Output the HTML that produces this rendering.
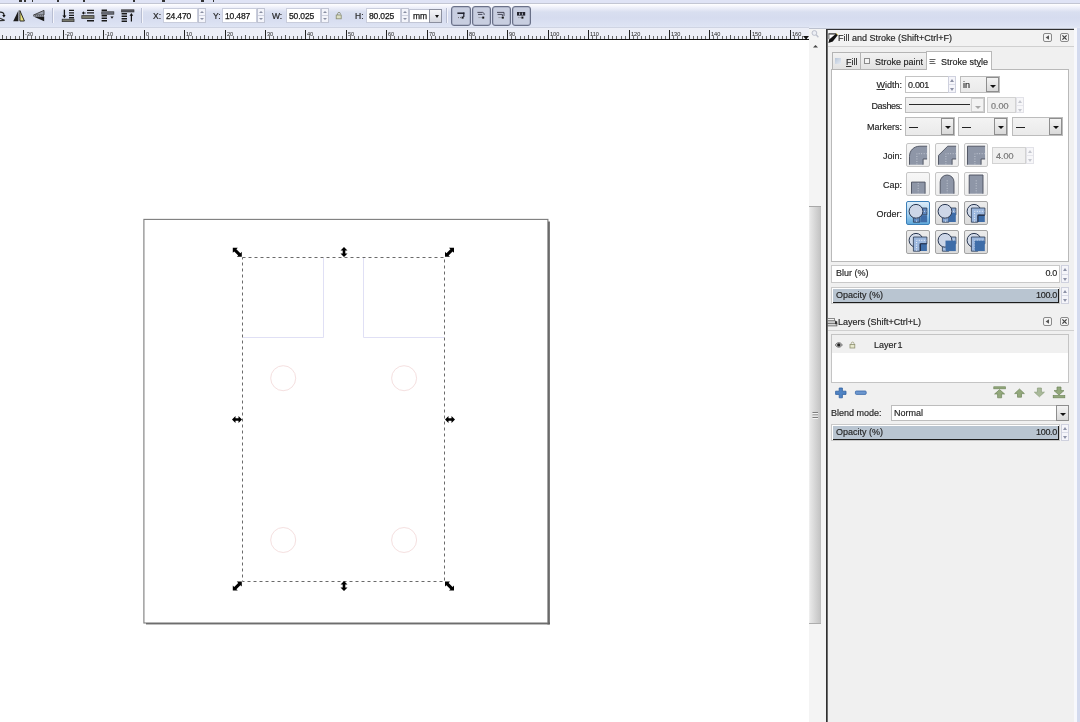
<!DOCTYPE html>
<html lang="en">
<head>
<meta charset="utf-8">
<title>Inkscape</title>
<style>
*{box-sizing:border-box;margin:0;padding:0}
html,body{width:1080px;height:722px;overflow:hidden;background:#fff}
body{position:relative;-webkit-font-smoothing:antialiased;font-family:"Liberation Sans",sans-serif;font-size:9px;color:#1a1a1a}
.abs,.abs>*{position:absolute}
.a{position:absolute}
/* top */
#topstrip{left:0;top:0;width:1080px;height:4px;background:#dfe3f5;border-bottom:1px solid #c3c6d3}
#topstrip i{position:absolute;top:0;height:2px;background:#333}
#toolbar{left:0;top:4px;width:1080px;height:24px;background:linear-gradient(#fff 0,#f1f2fb 3px,#d9dff0 8px,#d6dcef 14px,#dde3f3 22px,#e4e8f5 24px)}
#rulerbg{left:0;top:27px;width:809px;height:13px;background:#eceef7;border-top:1px solid #cfd4e3;border-bottom:1px solid #111}
.ruler{position:absolute;left:0;top:28px;will-change:transform}
.tl{position:absolute;font-size:8.5px;color:#161616;-webkit-text-stroke:0.2px #333;top:12px;line-height:9px}
.tf{position:absolute;top:8px;height:15px;background:#fff;border:1px solid #c9cddc;font-size:8.5px;line-height:15px;padding-left:2px;letter-spacing:-0.15px;color:#111;-webkit-text-stroke:0.25px #222}
.sp{position:absolute;width:8px;height:15px;top:8px;border:1px solid #c0c4d3;background:#f3f4fa}
.sp b{position:absolute;left:0;width:6px;height:6px}
.sp b:first-child{top:0;border-bottom:1px solid #d0d3e0;height:7px}.sp b:last-child{top:7px}
.sp b:after{content:"";position:absolute;left:0.5px;border:2.5px solid transparent}
.sp b:first-child:after{top:1.5px;border-bottom:2.5px solid #8a8fa3;border-top:0}
.sp b:last-child:after{top:2px;border-top:2.5px solid #8a8fa3;border-bottom:0}
.sep{position:absolute;top:9px;width:1px;height:15px;background:#b9bfd2}
.tog{position:absolute;top:6px;width:20px;height:20px;border:1px solid #697088;border-radius:3px;background:#c8cee0;box-shadow:inset 0 0 0 0.5px #9aa0b6}
/* canvas */
#page{left:143px;top:219px;width:406px;height:405px;border:1px solid #7a7a7a;border-right:2px solid #5e5e5e;border-bottom:2px solid #5e5e5e;background:#fff}
/* scrollbar */
#vs{left:809px;top:28px;width:17px;height:694px;background:#f4f4f4}
#thumb{left:809px;top:206px;width:12px;height:418px;background:linear-gradient(90deg,#f1f1f1 0,#e6e6e6 1.5px,#d8d8d8 45%,#c6c6c6 10.5px,#bdbdbd 12px);border-top:1px solid #a8a8a8;border-bottom:1px solid #adadad}
/* panel */
#panel{left:826px;top:29px;width:248px;height:693px;background:#f0f0f0;border-left:1px solid #303030;border-top:1px solid #303030;box-shadow:inset 1px 0 0 #6c6c6c}
#tbline{left:0;top:28px;width:1080px;height:1px;background:#bcc1ce}
#rstrip{left:1074px;top:28px;width:6px;height:694px;background:linear-gradient(90deg,#f7f8fc 0,#f7f8fc 2.5px,#d3daee 3.5px)}
.ph{position:absolute;left:828px;width:246px;height:16px;background:#f2f2f2;border-bottom:1px solid #d0d0d0}
.pt,.lbl,.fld,.cmb,.tl,.tf{will-change:transform}
.pt,.lbl,.fld,.cmb{-webkit-text-stroke:0.18px #333}
.pt{position:absolute;font-size:9px;line-height:11px;white-space:nowrap;color:#1a1a1a}
.hb{position:absolute;width:9px;height:9px;border:1px solid #8a8a8a;border-radius:2px;background:#f4f4f4}
.frame{position:absolute;background:#fff;border:1px solid #b9b9b9}
.tab{position:absolute;top:52px;height:18px;border:1px solid #b4b4b4;background:linear-gradient(#f2f2f2,#e2e2e2);}
.lbl{position:absolute;font-size:9px;line-height:11px;text-align:right;width:60px;left:842px;color:#1a1a1a;white-space:nowrap}
.fld{position:absolute;background:#fff;border:1px solid #c4c4c4;font-size:9px;line-height:14px;padding-left:3px;color:#1a1a1a}
.cmb{position:absolute;background:linear-gradient(#f3f3f3,#eaeaea);border:1px solid #bcbcbc;font-size:9px;line-height:14px;padding-left:4px}
.dd{position:absolute;right:0;top:0;bottom:0;width:13px;border:1px solid #8e8e8e;background:linear-gradient(#f4f4f4,#d9d9d9)}
.dd:after{content:"";position:absolute;left:2.5px;top:6.5px;border:3px solid transparent;border-top:3.5px solid #111;border-bottom:0}
.ddd{border-color:#d0d0d0;background:#f3f3f3}.ddd:after{border-top-color:#a8a8a8}
.dis{color:#9a9a9a;background:#f0f0f0;border-color:#d2d2d2}
.psp{position:absolute;width:8px;height:17px;border:1px solid #cfd1de;background:#f5f5fa}
.psp b{position:absolute;left:0;width:6px;height:7px}
.psp b:first-child{top:0;border-bottom:1px solid #d9dbe6;height:8px}.psp b:last-child{top:8px}
.psp b:after{content:"";position:absolute;left:0.5px;border:2.5px solid transparent}
.psp b:first-child:after{top:2px;border-bottom:3px solid #8c91a6;border-top:0}
.psp b:last-child:after{top:2.5px;border-top:3px solid #8c91a6;border-bottom:0}
.pd{border-color:#e2e2e8;background:#f7f7f9}.pd b:first-child{border-bottom-color:#e6e6ec}.pd b:first-child:after{border-bottom-color:#c6c8d0}.pd b:last-child:after{border-top-color:#c6c8d0}
.btn{position:absolute;width:24px;height:24px;border:1px solid #c6c6c6;border-radius:2px;background:linear-gradient(#f7f7f7,#ececec)}
.btn.g{border-color:#a3a3a3;background:linear-gradient(#ececec,#dcdcdc)}
.btn.on{border-color:#3c7fb8;background:linear-gradient(#dcecf9,#a9d2f0 55%,#5fa9dc)}
.btn svg{position:absolute;left:-1px;top:-1px}
.bar{position:absolute;background:#fff;border:1px solid #c9c9c9}
.bar .fill{position:absolute;left:1px;top:1px;right:0;bottom:0;background:#b9c5d1;border-bottom:1px solid #1c1c1c;border-right:1px solid #1c1c1c}
</style>
</head>
<body>
<!-- ===== top strip / toolbar ===== -->
<div id="topstrip" class="a"><i style="left:19px;width:3px"></i><i style="left:24px;width:2px"></i><i style="left:32px;width:1px"></i><i style="left:57px;width:2px"></i><i style="left:83px;width:2px"></i><i style="left:133px;width:2px"></i><i style="left:162px;width:3px"></i><i style="left:201px;width:3px"></i><i style="left:213px;width:1px"></i></div>
<div id="toolbar" class="a"></div>
<svg class="a" style="left:0;top:4px" width="540" height="24" viewBox="0 4 540 24"><path d="M0 12.2C2.5 12 4 13 4 15.2" fill="none" stroke="#222" stroke-width="1.3"/><path d="M2.2 15L5.6 15 3.9 17.6Z" fill="#111"/><path d="M0 18.2L4.6 20.4 0 20.6" fill="none" stroke="#333" stroke-width="1.2"/><path d="M13.2 21.2L18.4 10.4V21.2Z" fill="#1c1c1c"/><path d="M19.9 10.6L24.4 21H19.9Z" fill="#e9e27a" stroke="#2a2a2a" stroke-width="1"/><path d="M19.1 10V22" stroke="#888" stroke-width="0.8" stroke-dasharray="1 1"/><path d="M33.6 15L44 10.4V15Z" fill="#9aa0ad" stroke="#3a3a3a" stroke-width="0.9"/><path d="M33.4 16.6H44.2V21.2Z" fill="#1c1c1c"/><path d="M33 15.8H45" stroke="#444" stroke-width="0.8" stroke-dasharray="1 1"/><path d="M52.5 8V23" stroke="#b8bed2" stroke-width="1"/><path d="M53.5 8V23" stroke="#f4f5fb" stroke-width="1"/><path d="M141.5 8V23" stroke="#b8bed2" stroke-width="1"/><path d="M142.5 8V23" stroke="#f4f5fb" stroke-width="1"/><path d="M446.5 8V23" stroke="#b8bed2" stroke-width="1"/><path d="M447.5 8V23" stroke="#f4f5fb" stroke-width="1"/><g stroke="#1a1a1a" stroke-width="1.4"><path d="M69 10.4H74M69 12.9H74M69 15.4H74M69 17.7H74"/></g><path d="M64.4 9.6V16" stroke="#111" stroke-width="1.3"/><path d="M62.4 15.4H66.4L64.4 18.2Z" fill="#111"/><rect x="62.2" y="19.2" width="11.8" height="2.4" fill="#77786a" stroke="#3a3a3a" stroke-width="0.8"/><g stroke="#1a1a1a" stroke-width="1.4"><path d="M87 10.4H94M87 12.9H94M87 20.7H94"/></g><rect x="81.8" y="15.6" width="12.2" height="2.8" fill="#77786a" stroke="#3a3a3a" stroke-width="0.8"/><path d="M81.8 13L84 11.2V12.4H85.6V13.6H84V14.8Z" fill="#111"/><g stroke="#1a1a1a" stroke-width="1.4"><path d="M101.6 10.2H107M101.6 15.8H107M101.6 18.3H107M101.6 20.8H107"/></g><rect x="101.8" y="11.8" width="12" height="2.4" fill="#6f7280" stroke="#3a3a3a" stroke-width="0.8"/><path d="M110.4 16.4H113.6L112 18.8Z" fill="#111"/><rect x="121.6" y="9.8" width="12.4" height="2.2" fill="#55565e" stroke="#2a2a2a" stroke-width="0.6"/><g stroke="#1a1a1a" stroke-width="1.4"><path d="M121.6 13.8H127M121.6 16.3H127M121.6 18.8H127M121.6 21.2H127"/></g><path d="M131.4 15V21.6" stroke="#111" stroke-width="1.2"/><path d="M129.6 15.8L131.4 13 133.2 15.8Z" fill="#111"/><path d="M337.6 15.2V13.6C337.6 12 340.4 12 340.4 13.6V14.4" fill="none" stroke="#8c9078" stroke-width="0.9"/><rect x="336.2" y="15" width="5" height="3.8" fill="#dcdfc4" stroke="#868a70" stroke-width="0.8"/></svg><div class="tl" style="left:153px">X:</div><div class="tf" style="left:163px;width:35px">24.470</div><div class="sp" style="left:198px"><b></b><b></b></div><div class="tl" style="left:213px">Y:</div><div class="tf" style="left:222px;width:35px">10.487</div><div class="sp" style="left:257px"><b></b><b></b></div><div class="tl" style="left:272px">W:</div><div class="tf" style="left:286px;width:35px">50.025</div><div class="sp" style="left:321px"><b></b><b></b></div><div class="tl" style="left:355px">H:</div><div class="tf" style="left:366px;width:35px">80.025</div><div class="sp" style="left:401px"><b></b><b></b></div><div class="tf" style="left:409px;width:33px;top:9px;height:14px;line-height:12px;padding-left:3px;border-color:#c2c6d6">mm<span style="position:absolute;right:-1px;top:-1px;width:13px;height:14px;border:1px solid #8b8f9e;background:linear-gradient(#f6f6f8,#d6d8e0)"></span><span style="position:absolute;right:2.5px;top:5px;border:2.5px solid transparent;border-top:3px solid #111;border-bottom:0"></span></div><div class="tog" style="left:451px;width:20px"></div><div class="tog" style="left:472px;width:19px"></div><div class="tog" style="left:492px;width:19px"></div><div class="tog" style="left:512px;width:19px"></div><svg class="a" style="left:451px;top:6px" width="82" height="20" viewBox="451 6 82 20"><path d="M457.4 13.2H464.4" stroke="#1d1d28" stroke-width="1.5"/><path d="M463.8 12.4V17" stroke="#1d1d28" stroke-width="1.2"/><path d="M458 17.6H461" stroke="#555" stroke-width="0.8" stroke-dasharray="1 1"/><rect x="461.6" y="16.6" width="2" height="2" fill="#111"/><path d="M477.4 12.4H482.6C484 12.6 484.2 14 484.2 15" fill="none" stroke="#3a3a48" stroke-width="0.9"/><path d="M478 14.4H482.4" stroke="#3a3a48" stroke-width="0.9"/><path d="M478.6 17.6H482" stroke="#666" stroke-width="0.8" stroke-dasharray="1 1"/><rect x="482.2" y="16.6" width="2" height="2" fill="#111"/><path d="M497 12.4H504V16" fill="none" stroke="#3a3a48" stroke-width="0.9"/><path d="M497.6 14.4H502.4V16" fill="none" stroke="#3a3a48" stroke-width="0.9"/><path d="M498.6 17.6H501.6" stroke="#666" stroke-width="0.8" stroke-dasharray="1 1"/><rect x="501.8" y="16.6" width="2" height="2" fill="#111"/><rect x="517" y="12" width="8.2" height="3.6" fill="#23232c"/><path d="M519.6 12.6V15M522.4 12.6V15" stroke="#c9cfe1" stroke-width="0.8"/><path d="M518.4 17.6H521" stroke="#666" stroke-width="0.8" stroke-dasharray="1 1"/><rect x="521.4" y="16.6" width="2" height="2" fill="#111"/></svg>
<!-- ===== ruler ===== -->
<div id="rulerbg" class="a"></div>
<svg class="ruler" width="809" height="12" viewBox="0 0 809 12" style="font-family:'Liberation Sans',sans-serif"><path d="M2.5 7V11" stroke="#555" stroke-width="1"/><path d="M6.5 8V11" stroke="#666" stroke-width="1"/><path d="M10.5 8V11" stroke="#666" stroke-width="1"/><path d="M15.5 8V11" stroke="#666" stroke-width="1"/><path d="M19.5 8V11" stroke="#666" stroke-width="1"/><path d="M23.5 2V11" stroke="#222" stroke-width="1"/><path d="M27.5 8V11" stroke="#666" stroke-width="1"/><path d="M31.5 8V11" stroke="#666" stroke-width="1"/><path d="M35.5 8V11" stroke="#666" stroke-width="1"/><path d="M39.5 8V11" stroke="#666" stroke-width="1"/><path d="M43.5 7V11" stroke="#555" stroke-width="1"/><path d="M47.5 8V11" stroke="#666" stroke-width="1"/><path d="M51.5 8V11" stroke="#666" stroke-width="1"/><path d="M55.5 8V11" stroke="#666" stroke-width="1"/><path d="M59.5 8V11" stroke="#666" stroke-width="1"/><path d="M63.5 2V11" stroke="#222" stroke-width="1"/><path d="M67.5 8V11" stroke="#666" stroke-width="1"/><path d="M71.5 8V11" stroke="#666" stroke-width="1"/><path d="M75.5 8V11" stroke="#666" stroke-width="1"/><path d="M79.5 8V11" stroke="#666" stroke-width="1"/><path d="M83.5 7V11" stroke="#555" stroke-width="1"/><path d="M87.5 8V11" stroke="#666" stroke-width="1"/><path d="M91.5 8V11" stroke="#666" stroke-width="1"/><path d="M95.5 8V11" stroke="#666" stroke-width="1"/><path d="M99.5 8V11" stroke="#666" stroke-width="1"/><path d="M103.5 2V11" stroke="#222" stroke-width="1"/><path d="M107.5 8V11" stroke="#666" stroke-width="1"/><path d="M111.5 8V11" stroke="#666" stroke-width="1"/><path d="M116.5 8V11" stroke="#666" stroke-width="1"/><path d="M120.5 8V11" stroke="#666" stroke-width="1"/><path d="M124.5 7V11" stroke="#555" stroke-width="1"/><path d="M128.5 8V11" stroke="#666" stroke-width="1"/><path d="M132.5 8V11" stroke="#666" stroke-width="1"/><path d="M136.5 8V11" stroke="#666" stroke-width="1"/><path d="M140.5 8V11" stroke="#666" stroke-width="1"/><path d="M144.5 2V11" stroke="#222" stroke-width="1"/><path d="M148.5 8V11" stroke="#666" stroke-width="1"/><path d="M152.5 8V11" stroke="#666" stroke-width="1"/><path d="M156.5 8V11" stroke="#666" stroke-width="1"/><path d="M160.5 8V11" stroke="#666" stroke-width="1"/><path d="M164.5 7V11" stroke="#555" stroke-width="1"/><path d="M168.5 8V11" stroke="#666" stroke-width="1"/><path d="M172.5 8V11" stroke="#666" stroke-width="1"/><path d="M176.5 8V11" stroke="#666" stroke-width="1"/><path d="M180.5 8V11" stroke="#666" stroke-width="1"/><path d="M184.5 2V11" stroke="#222" stroke-width="1"/><path d="M188.5 8V11" stroke="#666" stroke-width="1"/><path d="M192.5 8V11" stroke="#666" stroke-width="1"/><path d="M196.5 8V11" stroke="#666" stroke-width="1"/><path d="M200.5 8V11" stroke="#666" stroke-width="1"/><path d="M204.5 7V11" stroke="#555" stroke-width="1"/><path d="M208.5 8V11" stroke="#666" stroke-width="1"/><path d="M212.5 8V11" stroke="#666" stroke-width="1"/><path d="M217.5 8V11" stroke="#666" stroke-width="1"/><path d="M221.5 8V11" stroke="#666" stroke-width="1"/><path d="M225.5 2V11" stroke="#222" stroke-width="1"/><path d="M229.5 8V11" stroke="#666" stroke-width="1"/><path d="M233.5 8V11" stroke="#666" stroke-width="1"/><path d="M237.5 8V11" stroke="#666" stroke-width="1"/><path d="M241.5 8V11" stroke="#666" stroke-width="1"/><path d="M245.5 7V11" stroke="#555" stroke-width="1"/><path d="M249.5 8V11" stroke="#666" stroke-width="1"/><path d="M253.5 8V11" stroke="#666" stroke-width="1"/><path d="M257.5 8V11" stroke="#666" stroke-width="1"/><path d="M261.5 8V11" stroke="#666" stroke-width="1"/><path d="M265.5 2V11" stroke="#222" stroke-width="1"/><path d="M269.5 8V11" stroke="#666" stroke-width="1"/><path d="M273.5 8V11" stroke="#666" stroke-width="1"/><path d="M277.5 8V11" stroke="#666" stroke-width="1"/><path d="M281.5 8V11" stroke="#666" stroke-width="1"/><path d="M285.5 7V11" stroke="#555" stroke-width="1"/><path d="M289.5 8V11" stroke="#666" stroke-width="1"/><path d="M293.5 8V11" stroke="#666" stroke-width="1"/><path d="M297.5 8V11" stroke="#666" stroke-width="1"/><path d="M301.5 8V11" stroke="#666" stroke-width="1"/><path d="M305.5 2V11" stroke="#222" stroke-width="1"/><path d="M309.5 8V11" stroke="#666" stroke-width="1"/><path d="M313.5 8V11" stroke="#666" stroke-width="1"/><path d="M318.5 8V11" stroke="#666" stroke-width="1"/><path d="M322.5 8V11" stroke="#666" stroke-width="1"/><path d="M326.5 7V11" stroke="#555" stroke-width="1"/><path d="M330.5 8V11" stroke="#666" stroke-width="1"/><path d="M334.5 8V11" stroke="#666" stroke-width="1"/><path d="M338.5 8V11" stroke="#666" stroke-width="1"/><path d="M342.5 8V11" stroke="#666" stroke-width="1"/><path d="M346.5 2V11" stroke="#222" stroke-width="1"/><path d="M350.5 8V11" stroke="#666" stroke-width="1"/><path d="M354.5 8V11" stroke="#666" stroke-width="1"/><path d="M358.5 8V11" stroke="#666" stroke-width="1"/><path d="M362.5 8V11" stroke="#666" stroke-width="1"/><path d="M366.5 7V11" stroke="#555" stroke-width="1"/><path d="M370.5 8V11" stroke="#666" stroke-width="1"/><path d="M374.5 8V11" stroke="#666" stroke-width="1"/><path d="M378.5 8V11" stroke="#666" stroke-width="1"/><path d="M382.5 8V11" stroke="#666" stroke-width="1"/><path d="M386.5 2V11" stroke="#222" stroke-width="1"/><path d="M390.5 8V11" stroke="#666" stroke-width="1"/><path d="M394.5 8V11" stroke="#666" stroke-width="1"/><path d="M398.5 8V11" stroke="#666" stroke-width="1"/><path d="M402.5 8V11" stroke="#666" stroke-width="1"/><path d="M406.5 7V11" stroke="#555" stroke-width="1"/><path d="M410.5 8V11" stroke="#666" stroke-width="1"/><path d="M414.5 8V11" stroke="#666" stroke-width="1"/><path d="M419.5 8V11" stroke="#666" stroke-width="1"/><path d="M423.5 8V11" stroke="#666" stroke-width="1"/><path d="M427.5 2V11" stroke="#222" stroke-width="1"/><path d="M431.5 8V11" stroke="#666" stroke-width="1"/><path d="M435.5 8V11" stroke="#666" stroke-width="1"/><path d="M439.5 8V11" stroke="#666" stroke-width="1"/><path d="M443.5 8V11" stroke="#666" stroke-width="1"/><path d="M447.5 7V11" stroke="#555" stroke-width="1"/><path d="M451.5 8V11" stroke="#666" stroke-width="1"/><path d="M455.5 8V11" stroke="#666" stroke-width="1"/><path d="M459.5 8V11" stroke="#666" stroke-width="1"/><path d="M463.5 8V11" stroke="#666" stroke-width="1"/><path d="M467.5 2V11" stroke="#222" stroke-width="1"/><path d="M471.5 8V11" stroke="#666" stroke-width="1"/><path d="M475.5 8V11" stroke="#666" stroke-width="1"/><path d="M479.5 8V11" stroke="#666" stroke-width="1"/><path d="M483.5 8V11" stroke="#666" stroke-width="1"/><path d="M487.5 7V11" stroke="#555" stroke-width="1"/><path d="M491.5 8V11" stroke="#666" stroke-width="1"/><path d="M495.5 8V11" stroke="#666" stroke-width="1"/><path d="M499.5 8V11" stroke="#666" stroke-width="1"/><path d="M503.5 8V11" stroke="#666" stroke-width="1"/><path d="M507.5 2V11" stroke="#222" stroke-width="1"/><path d="M511.5 8V11" stroke="#666" stroke-width="1"/><path d="M515.5 8V11" stroke="#666" stroke-width="1"/><path d="M520.5 8V11" stroke="#666" stroke-width="1"/><path d="M524.5 8V11" stroke="#666" stroke-width="1"/><path d="M528.5 7V11" stroke="#555" stroke-width="1"/><path d="M532.5 8V11" stroke="#666" stroke-width="1"/><path d="M536.5 8V11" stroke="#666" stroke-width="1"/><path d="M540.5 8V11" stroke="#666" stroke-width="1"/><path d="M544.5 8V11" stroke="#666" stroke-width="1"/><path d="M548.5 2V11" stroke="#222" stroke-width="1"/><path d="M552.5 8V11" stroke="#666" stroke-width="1"/><path d="M556.5 8V11" stroke="#666" stroke-width="1"/><path d="M560.5 8V11" stroke="#666" stroke-width="1"/><path d="M564.5 8V11" stroke="#666" stroke-width="1"/><path d="M568.5 7V11" stroke="#555" stroke-width="1"/><path d="M572.5 8V11" stroke="#666" stroke-width="1"/><path d="M576.5 8V11" stroke="#666" stroke-width="1"/><path d="M580.5 8V11" stroke="#666" stroke-width="1"/><path d="M584.5 8V11" stroke="#666" stroke-width="1"/><path d="M588.5 2V11" stroke="#222" stroke-width="1"/><path d="M592.5 8V11" stroke="#666" stroke-width="1"/><path d="M596.5 8V11" stroke="#666" stroke-width="1"/><path d="M600.5 8V11" stroke="#666" stroke-width="1"/><path d="M604.5 8V11" stroke="#666" stroke-width="1"/><path d="M608.5 7V11" stroke="#555" stroke-width="1"/><path d="M612.5 8V11" stroke="#666" stroke-width="1"/><path d="M616.5 8V11" stroke="#666" stroke-width="1"/><path d="M621.5 8V11" stroke="#666" stroke-width="1"/><path d="M625.5 8V11" stroke="#666" stroke-width="1"/><path d="M629.5 2V11" stroke="#222" stroke-width="1"/><path d="M633.5 8V11" stroke="#666" stroke-width="1"/><path d="M637.5 8V11" stroke="#666" stroke-width="1"/><path d="M641.5 8V11" stroke="#666" stroke-width="1"/><path d="M645.5 8V11" stroke="#666" stroke-width="1"/><path d="M649.5 7V11" stroke="#555" stroke-width="1"/><path d="M653.5 8V11" stroke="#666" stroke-width="1"/><path d="M657.5 8V11" stroke="#666" stroke-width="1"/><path d="M661.5 8V11" stroke="#666" stroke-width="1"/><path d="M665.5 8V11" stroke="#666" stroke-width="1"/><path d="M669.5 2V11" stroke="#222" stroke-width="1"/><path d="M673.5 8V11" stroke="#666" stroke-width="1"/><path d="M677.5 8V11" stroke="#666" stroke-width="1"/><path d="M681.5 8V11" stroke="#666" stroke-width="1"/><path d="M685.5 8V11" stroke="#666" stroke-width="1"/><path d="M689.5 7V11" stroke="#555" stroke-width="1"/><path d="M693.5 8V11" stroke="#666" stroke-width="1"/><path d="M697.5 8V11" stroke="#666" stroke-width="1"/><path d="M701.5 8V11" stroke="#666" stroke-width="1"/><path d="M705.5 8V11" stroke="#666" stroke-width="1"/><path d="M709.5 2V11" stroke="#222" stroke-width="1"/><path d="M713.5 8V11" stroke="#666" stroke-width="1"/><path d="M717.5 8V11" stroke="#666" stroke-width="1"/><path d="M722.5 8V11" stroke="#666" stroke-width="1"/><path d="M726.5 8V11" stroke="#666" stroke-width="1"/><path d="M730.5 7V11" stroke="#555" stroke-width="1"/><path d="M734.5 8V11" stroke="#666" stroke-width="1"/><path d="M738.5 8V11" stroke="#666" stroke-width="1"/><path d="M742.5 8V11" stroke="#666" stroke-width="1"/><path d="M746.5 8V11" stroke="#666" stroke-width="1"/><path d="M750.5 2V11" stroke="#222" stroke-width="1"/><path d="M754.5 8V11" stroke="#666" stroke-width="1"/><path d="M758.5 8V11" stroke="#666" stroke-width="1"/><path d="M762.5 8V11" stroke="#666" stroke-width="1"/><path d="M766.5 8V11" stroke="#666" stroke-width="1"/><path d="M770.5 7V11" stroke="#555" stroke-width="1"/><path d="M774.5 8V11" stroke="#666" stroke-width="1"/><path d="M778.5 8V11" stroke="#666" stroke-width="1"/><path d="M782.5 8V11" stroke="#666" stroke-width="1"/><path d="M786.5 8V11" stroke="#666" stroke-width="1"/><path d="M790.5 2V11" stroke="#222" stroke-width="1"/><path d="M794.5 8V11" stroke="#666" stroke-width="1"/><path d="M798.5 8V11" stroke="#666" stroke-width="1"/><path d="M802.5 8V11" stroke="#666" stroke-width="1"/><path d="M806.5 8V11" stroke="#666" stroke-width="1"/><text x="25" y="8" font-size="5.6" fill="#222">-30</text><text x="65" y="8" font-size="5.6" fill="#222">-20</text><text x="105" y="8" font-size="5.6" fill="#222">-10</text><text x="146" y="8" font-size="5.6" fill="#222">0</text><text x="186" y="8" font-size="5.6" fill="#222">10</text><text x="227" y="8" font-size="5.6" fill="#222">20</text><text x="267" y="8" font-size="5.6" fill="#222">30</text><text x="307" y="8" font-size="5.6" fill="#222">40</text><text x="348" y="8" font-size="5.6" fill="#222">50</text><text x="388" y="8" font-size="5.6" fill="#222">60</text><text x="429" y="8" font-size="5.6" fill="#222">70</text><text x="469" y="8" font-size="5.6" fill="#222">80</text><text x="509" y="8" font-size="5.6" fill="#222">90</text><text x="550" y="8" font-size="5.6" fill="#222">100</text><text x="590" y="8" font-size="5.6" fill="#222">110</text><text x="631" y="8" font-size="5.6" fill="#222">120</text><text x="671" y="8" font-size="5.6" fill="#222">130</text><text x="711" y="8" font-size="5.6" fill="#222">140</text><text x="752" y="8" font-size="5.6" fill="#222">150</text><text x="792" y="8" font-size="5.6" fill="#222">160</text><path d="M803 8h6l-3 3.5z" fill="#111"/></svg>
<!-- ===== canvas ===== -->
<svg class="a" style="left:0;top:40px" width="809" height="682" viewBox="0 40 809 682"><rect x="547.4" y="221.5" width="2.4" height="402.9" fill="#5c5c5c"/><rect x="146" y="622.5" width="403.8" height="1.9" fill="#5c5c5c"/><rect x="143.9" y="219.4" width="404" height="403.6" fill="#fff" stroke="#7c7c7c" stroke-width="1.1"/><g fill="none" stroke="#e0e0f5" stroke-width="1"><path d="M243 337.5H323.5V258"/><path d="M444 337.5H363.5V258"/></g><g fill="none" stroke="#f5e0e0" stroke-width="1"><circle cx="283.2" cy="378.2" r="12.5"/><circle cx="404.1" cy="378.2" r="12.5"/><circle cx="283.2" cy="540" r="12.5"/><circle cx="404.1" cy="540" r="12.5"/></g><rect x="242.5" y="257.5" width="202" height="324" fill="none" stroke="#6a6a6a" stroke-width="1" stroke-dasharray="3 3"/><path d="M0 0H5L3.6 1.4 7.6 5.4 9 4V9H4L5.4 7.6 1.4 3.6 0 5Z" transform="translate(232.8 247.8)" fill="#000"/><path d="M9 0H4L5.4 1.4 1.4 5.4 0 4V9H5L3.6 7.6 7.6 3.6 9 5Z" transform="translate(445 247.8)" fill="#000"/><path d="M9 0H4L5.4 1.4 1.4 5.4 0 4V9H5L3.6 7.6 7.6 3.6 9 5Z" transform="translate(232.8 581.6)" fill="#000"/><path d="M0 0H5L3.6 1.4 7.6 5.4 9 4V9H4L5.4 7.6 1.4 3.6 0 5Z" transform="translate(445 581.6)" fill="#000"/><path d="M3.5 0L7 3.5H4.8V6.5H7L3.5 10 0 6.5H2.2V3.5H0Z" transform="translate(340.5 247)" fill="#000"/><path d="M3.5 0L7 3.5H4.8V6.5H7L3.5 10 0 6.5H2.2V3.5H0Z" transform="translate(340.5 581)" fill="#000"/><path d="M0 3.5L3.5 0V2.2H6.5V0L10 3.5 6.5 7V4.8H3.5V7Z" transform="translate(232 416)" fill="#000"/><path d="M0 3.5L3.5 0V2.2H6.5V0L10 3.5 6.5 7V4.8H3.5V7Z" transform="translate(445 416)" fill="#000"/></svg>
<!-- ===== scrollbar ===== -->
<div id="vs" class="a"></div>
<div id="thumb" class="a"></div>
<svg class="a" style="left:809px;top:28px" width="17" height="400" viewBox="809 28 17 400"><circle cx="814.4" cy="33" r="2.4" fill="#eceef4" stroke="#bcc0cc" stroke-width="1"/><path d="M816.2 34.8L818.4 37.2" stroke="#bcc0cc" stroke-width="1.3"/><path d="M813 47.6L815.5 45 818 47.6Z" fill="#444"/><path d="M812.5 412.5H818M812.5 415H818M812.5 417.5H818" stroke="#7d7d7d" stroke-width="1"/><path d="M812.5 413.5H818M812.5 416H818M812.5 418.5H818" stroke="#f4f4f4" stroke-width="1"/></svg>
<!-- ===== docked panel ===== -->
<div id="tbline" class="a" style="left:809px;width:271px"></div>
<div id="panel" class="a"></div>
<div id="rstrip" class="a"></div>
<div class="ph" style="top:30px;height:17px"></div><svg class="a" style="left:827.5px;top:33px" width="11" height="11" viewBox="0 0 11 11"><path d="M0.8 0.8H8.6L2 8.6H0.8Z" fill="#fbfbfb"/><path d="M0.6 0.9H8.4" stroke="#2a2a2a" stroke-width="1.2"/><path d="M0.9 0.6V6" stroke="#555" stroke-width="0.9"/><path d="M8 0.8L9.9 1.9 4.8 8.6 0.4 10 1.2 6.6Z" fill="#111"/><path d="M8.2 0.4L10 2" stroke="#d8c764" stroke-width="1"/></svg><div class="pt" style="left:838px;top:33.4px;">Fill and Stroke (Shift+Ctrl+F)</div><div class="hb" style="left:1043px;top:33px"></div><div class="hb" style="left:1060px;top:33px"></div><svg class="a" style="left:1043px;top:33px" width="27" height="9" viewBox="0 0 27 9"><path d="M6 2.2V6.8L2.6 4.5Z" fill="#555"/><path d="M19.4 2.4L23.6 6.6M23.6 2.4L19.4 6.6" stroke="#444" stroke-width="1.3"/></svg><div class="frame" style="left:831px;top:69px;width:238px;height:193px"></div><div class="tab" style="left:832px;width:29px"></div><div class="tab" style="left:860px;width:67px"></div><div class="tab" style="left:926px;width:66px;top:51px;height:19px;background:#fff;border-bottom:0;border-color:#b9b9b9"></div><div class="a" style="left:835px;top:58px;width:6px;height:6px;background:linear-gradient(135deg,#b8c6d8,#e6ebf3)"></div><div class="a" style="left:864px;top:58px;width:6px;height:6px;border:1px solid #8a8a8a;background:#f4f4f4"></div><svg class="a" style="left:929px;top:58px" width="7" height="7" viewBox="0 0 7 7"><path d="M0.5 1.5H6.5M0.5 3.5H5.5M0.5 5.5H6.5" stroke="#555" stroke-width="0.9"/></svg><div class="pt" style="left:846px;top:56.6px;"><u>F</u>ill</div><div class="pt" style="left:875px;top:56.6px;">Stroke paint</div><div class="pt" style="left:941px;top:56.6px;">Stroke st<u>y</u>le</div><div class="lbl" style="top:79.9px"><u>W</u>idth:</div><div class="fld" style="left:905px;top:76px;width:44px;height:17px;line-height:17px;padding-left:2px;letter-spacing:-0.3px">0.001</div><div class="psp" style="left:948px;top:76px;height:17px"><b style="height:8px"></b><b style="top:8px;height:7px"></b></div><div class="cmb" style="left:960px;top:76px;width:40px;height:17px;line-height:17px;padding-left:2px">in<span class="dd"></span></div><div class="lbl" style="top:100.7px"><span style="letter-spacing:-0.35px">Dashes:</span></div><div class="cmb" style="left:905px;top:97px;width:80px;height:16px"><span class="a" style="left:3px;top:6px;width:61px;height:1px;background:#2a2a2a"></span><span class="dd ddd"></span></div><div class="fld dis" style="left:987px;top:97px;width:29px;height:16px;line-height:16px">0.00</div><div class="psp pd" style="left:1016px;top:97px;height:16px"><b style="height:8px"></b><b style="top:8px;height:6px"></b></div><div class="lbl" style="top:122.1px">Markers:</div><div class="cmb" style="left:905px;top:117px;width:50px;height:19px"><span class="a" style="left:3px;top:8.5px;width:9px;height:1.2px;background:#222"></span><span class="dd"></span></div><div class="cmb" style="left:958px;top:117px;width:50px;height:19px"><span class="a" style="left:3px;top:8.5px;width:9px;height:1.2px;background:#222"></span><span class="dd"></span></div><div class="cmb" style="left:1012px;top:117px;width:51px;height:19px"><span class="a" style="left:3px;top:8.5px;width:9px;height:1.2px;background:#222"></span><span class="dd"></span></div><div class="lbl" style="top:151.2px">Join:</div><div class="btn" style="left:906px;top:143px"><svg width="24" height="24" viewBox="-0.4 -0.4 24 24"><path d="M3.1 21.3V13C3.1 7 7.5 2.8 13.5 2.8H20.7V15.6H16.7V21.3Z" fill="#8e96a7"/><path d="M3.1 21.3V13C3.1 7 7.5 2.8 13.5 2.8H20.7" fill="none" stroke="#474d5b" stroke-width="0.9"/><path d="M20.7 15.6H16.7V21.3" fill="none" stroke="#474d5b" stroke-width="0.9"/><path d="M10.5 21V10.3H20.5" fill="none" stroke="#cdd2dc" stroke-width="0.9" stroke-dasharray="0.9 1.6"/></svg></div><div class="btn" style="left:935px;top:143px"><svg width="24" height="24" viewBox="-0.4 -0.4 24 24"><path d="M3.1 21.3V12L12.3 2.8H20.7V15.6H16.7V21.3Z" fill="#8e96a7"/><path d="M3.1 21.3V12L12.3 2.8H20.7" fill="none" stroke="#474d5b" stroke-width="0.9"/><path d="M20.7 15.6H16.7V21.3" fill="none" stroke="#474d5b" stroke-width="0.9"/><path d="M10.5 21V10.3H20.5" fill="none" stroke="#cdd2dc" stroke-width="0.9" stroke-dasharray="0.9 1.6"/></svg></div><div class="btn" style="left:964px;top:143px"><svg width="24" height="24" viewBox="-0.4 -0.4 24 24"><path d="M3.1 21.3V2.8H20.7V15.6H16.7V21.3Z" fill="#8e96a7"/><path d="M3.1 21.3V2.8H20.7" fill="none" stroke="#474d5b" stroke-width="0.9"/><path d="M20.7 15.6H16.7V21.3" fill="none" stroke="#474d5b" stroke-width="0.9"/><path d="M10.5 21V10.3H20.5" fill="none" stroke="#cdd2dc" stroke-width="0.9" stroke-dasharray="0.9 1.6"/></svg></div><div class="fld dis" style="left:992px;top:147px;width:34px;height:17px;line-height:17px">4.00</div><div class="psp pd" style="left:1026px;top:147px;height:17px"><b style="height:8px"></b><b style="top:8px;height:7px"></b></div><div class="lbl" style="top:179.9px">Cap:</div><div class="btn" style="left:906px;top:172px"><svg width="24" height="24" viewBox="-0.4 -0.4 24 24"><path d="M5.1 21.3V9.7H18.7V21.3" fill="#8e96a7" stroke="#474d5b" stroke-width="0.9"/><path d="M11.8 10.5V21" stroke="#cdd2dc" stroke-width="0.9" stroke-dasharray="0.9 1.6"/></svg></div><div class="btn" style="left:935px;top:172px"><svg width="24" height="24" viewBox="-0.4 -0.4 24 24"><path d="M4.8 21.3V9.5A6.9 6.9 0 0 1 18.6 9.5V21.3" fill="#8e96a7" stroke="#474d5b" stroke-width="0.9"/><path d="M11.8 8V21" stroke="#cdd2dc" stroke-width="0.9" stroke-dasharray="0.9 1.6"/></svg></div><div class="btn" style="left:964px;top:172px"><svg width="24" height="24" viewBox="-0.4 -0.4 24 24"><path d="M4.8 21.3V2.6H18.6V21.3" fill="#8e96a7" stroke="#474d5b" stroke-width="0.9"/><path d="M11.8 8V21" stroke="#cdd2dc" stroke-width="0.9" stroke-dasharray="0.9 1.6"/></svg></div><div class="lbl" style="top:209.1px">Order:</div><div class="btn on" style="left:906px;top:201px"><svg width="24" height="24" viewBox="0 0 24 24"><path d="M7.4 21.2V7H20.9V13.8H13.8V21.2Z" fill="#5f88bf" stroke="#2a3852" stroke-width="0.8"/><path d="M10.6 20.6V10.3H20.6" fill="none" stroke="#f2f6fc" stroke-width="1" stroke-dasharray="1 1.5"/><rect x="14.4" y="14.2" width="6.7" height="7.1" fill="#3f6da8"/><circle cx="10" cy="10.3" r="6.9" fill="#cdd6e7" stroke="#2a3852" stroke-width="1"/></svg></div><div class="btn g" style="left:935px;top:201px"><svg width="24" height="24" viewBox="0 0 24 24"><path d="M7.4 21.2V7H20.9V13.8H13.8V21.2Z" fill="#86a6d4" stroke="#2a3852" stroke-width="0.8"/><path d="M10.6 20.6V10.3H20.6" fill="none" stroke="#f2f6fc" stroke-width="1" stroke-dasharray="1 1.5"/><rect x="13.6" y="12" width="7.2" height="9" fill="#3f6da8"/><circle cx="10" cy="10.3" r="6.9" fill="#cdd6e7" stroke="#2a3852" stroke-width="1"/></svg></div><div class="btn g" style="left:964px;top:201px"><svg width="24" height="24" viewBox="0 0 24 24"><circle cx="10" cy="10.3" r="6.9" fill="#d3dbe9" stroke="#2a3852" stroke-width="1"/><path d="M7.4 21.2V7H20.9V13.8H13.8V21.2Z" fill="#9cb7de" stroke="#2a3852" stroke-width="0.8"/><path d="M10.6 20.6V10.3H20.6" fill="none" stroke="#f2f6fc" stroke-width="1" stroke-dasharray="1 1.5"/><rect x="14" y="14.4" width="6.8" height="6.6" fill="#3f6da8"/><path d="M14 21.0V14.4H20.8" fill="none" stroke="#1f2d49" stroke-width="1"/></svg></div><div class="btn g" style="left:906px;top:230px"><svg width="24" height="24" viewBox="0 0 24 24"><circle cx="10" cy="10.3" r="6.9" fill="#d3dbe9" stroke="#2a3852" stroke-width="1"/><path d="M7.4 21.2V7H20.9V13.8H13.8V21.2Z" fill="#9cb7de" stroke="#2a3852" stroke-width="0.8"/><path d="M10.6 20.6V10.3H20.6" fill="none" stroke="#f2f6fc" stroke-width="1" stroke-dasharray="1 1.5"/><rect x="14.5" y="13.8" width="6.4" height="7.2" fill="#3f6da8"/><path d="M14.5 21.0V13.8H20.9" fill="none" stroke="#1f2d49" stroke-width="1"/></svg></div><div class="btn g" style="left:935px;top:230px"><svg width="24" height="24" viewBox="0 0 24 24"><path d="M7.4 21.2V7H20.9V13.8H13.8V21.2Z" fill="#a9c0e2" stroke="#2a3852" stroke-width="0.8"/><path d="M10.6 20.6V10.3H20.6" fill="none" stroke="#f2f6fc" stroke-width="1" stroke-dasharray="1 1.5"/><circle cx="10" cy="10.3" r="6.9" fill="#cdd6e7" stroke="#2a3852" stroke-width="1"/><rect x="10.5" y="10.6" width="10.3" height="10.5" fill="#3f6da8"/></svg></div><div class="btn g" style="left:964px;top:230px"><svg width="24" height="24" viewBox="0 0 24 24"><circle cx="10" cy="10.3" r="6.9" fill="#d3dbe9" stroke="#2a3852" stroke-width="1"/><path d="M7.4 21.2V7H20.9V13.8H13.8V21.2Z" fill="#9cb7de" stroke="#2a3852" stroke-width="0.8"/><path d="M10.6 20.6V10.3H20.6" fill="none" stroke="#f2f6fc" stroke-width="1" stroke-dasharray="1 1.5"/><rect x="10.6" y="10.6" width="10.2" height="10.5" fill="#3f6da8"/></svg></div><div class="bar" style="left:831px;top:265px;width:229px;height:18px"></div><div class="pt" style="left:835.5px;top:268.4px;">Blur (%)</div><div class="pt" style="left:1020px;top:268.4px;width:37px;text-align:right;letter-spacing:-0.3px">0.0</div><div class="psp" style="left:1061px;top:265px;height:18px"><b style="height:9px"></b><b style="top:9px;height:7px"></b></div><div class="bar" style="left:831px;top:287px;width:229px;height:17px"><div class="fill"></div></div><div class="pt" style="left:835.5px;top:290.1px;">Opacity (%)</div><div class="pt" style="left:1020px;top:290.1px;width:37px;text-align:right;letter-spacing:-0.3px">100.0</div><div class="psp" style="left:1061px;top:287px;height:17px"><b style="height:8px"></b><b style="top:8px;height:7px"></b></div><div class="ph" style="top:314px;height:17px;background:#f0f0f0"></div><svg class="a" style="left:827px;top:317.5px" width="11" height="9" viewBox="0 0 11 9"><rect x="0.5" y="0.5" width="7" height="2.4" fill="#f3f3f3" stroke="#6f6f6f" stroke-width="0.8"/><rect x="0.5" y="2.9" width="8" height="2.4" fill="#e4e4e4" stroke="#666" stroke-width="0.8"/><rect x="0.5" y="5.3" width="9.4" height="2.6" fill="#d6d6d6" stroke="#5a5a5a" stroke-width="0.8"/><rect x="8" y="3.2" width="2.2" height="3" fill="#333"/></svg><div class="pt" style="left:838px;top:317.2px;">Layers (Shift+Ctrl+L)</div><div class="hb" style="left:1043px;top:317px"></div><div class="hb" style="left:1060px;top:317px"></div><svg class="a" style="left:1043px;top:317px" width="27" height="9" viewBox="0 0 27 9"><path d="M6 2.2V6.8L2.6 4.5Z" fill="#555"/><path d="M19.4 2.4L23.6 6.6M23.6 2.4L19.4 6.6" stroke="#444" stroke-width="1.3"/></svg><div class="frame" style="left:831px;top:334px;width:238px;height:49px;border-color:#c4c4c4"><div class="a" style="left:0;top:0;right:0;height:18px;background:#f0f0f0"></div></div><svg class="a" style="left:835px;top:341px" width="22" height="8" viewBox="0 0 22 8"><path d="M0.3 4C2 0.8 5.6 0.8 7.3 4C5.6 7 2 7 0.3 4Z" fill="#c9c9c9" stroke="#555" stroke-width="0.7"/><circle cx="3.8" cy="3.9" r="1.7" fill="#222"/><path d="M16.2 3.6V2.4C16.2 0.6 19 0.6 19 2.4V3" fill="none" stroke="#9a9c7a" stroke-width="0.8"/><rect x="15" y="3.4" width="4.8" height="3.6" fill="#e6e8cc" stroke="#8e9070" stroke-width="0.8"/></svg><div class="pt" style="left:874px;top:340.2px;word-spacing:-1.6px">Layer 1</div><svg class="a" style="left:835px;top:386px" width="234" height="13" viewBox="835 386 234 13"><path d="M839.2 388H842.4V391.2H846V394.4H842.4V397.8H839.2V394.4H835.6V391.2H839.2Z" fill="#4f83c4" stroke="#2f5fa0" stroke-width="0.8"/><rect x="855.4" y="391" width="10.8" height="3.4" rx="1" fill="#6c97cf" stroke="#3a68a8" stroke-width="0.8"/><g fill="#93a87c" stroke="#6f855a" stroke-width="0.7"><rect x="993.8" y="386.8" width="11.6" height="2"/><path d="M999.6 389.6L1004.6 394H1001.6V397.8H997.6V394H994.6Z"/><path d="M1019.5 389L1024.4 393.6H1021.5V397.2H1017.5V393.6H1014.6Z"/><path d="M1039.4 396.8L1044.4 392.2H1041.4V388H1037.4V392.2H1034.4Z" fill="#a9b99a" stroke="#8a9c78"/><path d="M1059 395L1064 390.6H1061V387H1057V390.6H1054Z"/><rect x="1053.2" y="395.6" width="11.6" height="2.2"/></g></svg><div class="pt" style="left:831.3px;top:408.0px;">Blend mode:</div><div class="fld" style="left:891px;top:405px;width:178px;height:16px;line-height:14px;padding-left:2px;border-color:#bdbdbd">Normal<span class="dd" style="top:-1px;right:-1px;bottom:-1px"></span></div><div class="bar" style="left:831px;top:424px;width:229px;height:17px"><div class="fill"></div></div><div class="pt" style="left:835.5px;top:427.4px;">Opacity (%)</div><div class="pt" style="left:1020px;top:427.4px;width:37px;text-align:right;letter-spacing:-0.3px">100.0</div><div class="psp" style="left:1061px;top:424px;height:17px"><b style="height:8px"></b><b style="top:8px;height:7px"></b></div>
</body>
</html>
